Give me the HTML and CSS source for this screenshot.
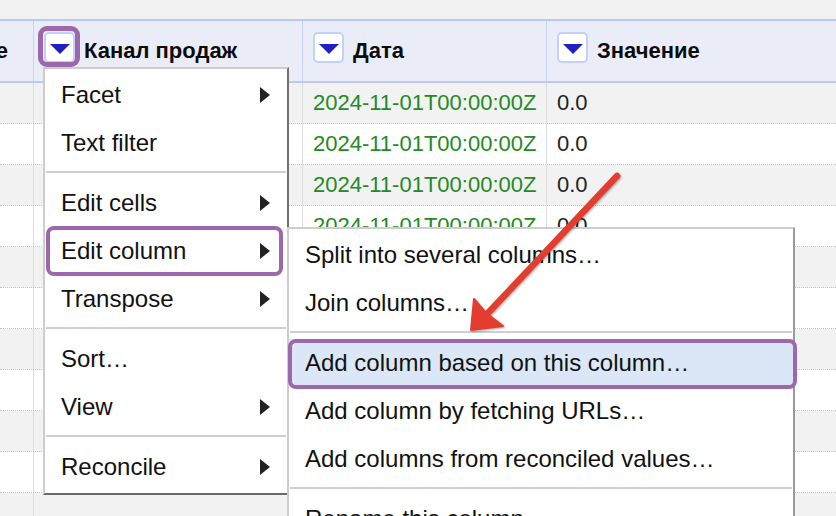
FILE: index.html
```html
<!DOCTYPE html>
<html lang="ru">
<head>
<meta charset="utf-8">
<title>OpenRefine — Edit column</title>
<link rel="stylesheet" href="styles.css">
</head>
<body>
<div class="topbar"></div>
<div class="grid">
  <div class="row head">
    <div class="hcell first"><span>Наименование</span></div>
    <div class="hcell"><span class="drop active"></span><span class="hlabel">Канал продаж</span></div>
    <div class="hcell"><span class="drop"></span><span class="hlabel">Дата</span></div>
    <div class="hcell"><span class="drop"></span><span class="hlabel">Значение</span></div>
  </div>
  <div class="body">
    <div class="row brow"><div class="cell"></div><div class="cell"></div><div class="cell date">2024-11-01T00:00:00Z</div><div class="cell num">0.0</div></div>
    <div class="row brow"><div class="cell"></div><div class="cell"></div><div class="cell date">2024-11-01T00:00:00Z</div><div class="cell num">0.0</div></div>
    <div class="row brow"><div class="cell"></div><div class="cell"></div><div class="cell date">2024-11-01T00:00:00Z</div><div class="cell num">0.0</div></div>
    <div class="row brow"><div class="cell"></div><div class="cell"></div><div class="cell date">2024-11-01T00:00:00Z</div><div class="cell num">0.0</div></div>
    <div class="row brow"><div class="cell"></div><div class="cell"></div><div class="cell"></div><div class="cell"></div></div>
    <div class="row brow"><div class="cell"></div><div class="cell"></div><div class="cell"></div><div class="cell"></div></div>
    <div class="row brow"><div class="cell"></div><div class="cell"></div><div class="cell"></div><div class="cell"></div></div>
    <div class="row brow"><div class="cell"></div><div class="cell"></div><div class="cell"></div><div class="cell"></div></div>
    <div class="row brow"><div class="cell"></div><div class="cell"></div><div class="cell"></div><div class="cell"></div></div>
    <div class="row brow"><div class="cell"></div><div class="cell"></div><div class="cell"></div><div class="cell"></div></div>
    <div class="row brow"><div class="cell"></div><div class="cell"></div><div class="cell"></div><div class="cell"></div></div>
  </div>
</div>

<div class="menu m1">
  <div class="item sub">Facet</div>
  <div class="item">Text filter</div>
  <div class="sep"></div>
  <div class="item sub">Edit cells</div>
  <div class="item sub hl hl-edit">Edit column</div>
  <div class="item sub">Transpose</div>
  <div class="sep"></div>
  <div class="item">Sort…</div>
  <div class="item sub">View</div>
  <div class="sep"></div>
  <div class="item sub">Reconcile</div>
</div>

<div class="menu m2">
  <div class="item">Split into several columns…</div>
  <div class="item">Join columns…</div>
  <div class="sep"></div>
  <div class="item hl hl-add selected">Add column based on this column…</div>
  <div class="item">Add column by fetching URLs…</div>
  <div class="item">Add columns from reconciled values…</div>
  <div class="sep"></div>
  <div class="item">Rename this column</div>
</div>

<svg class="annot" width="836" height="516" viewBox="0 0 836 516">
  <g class="arrow">
    <line x1="617" y1="176" x2="487" y2="314" stroke="#e33d30" stroke-width="6.5" stroke-linecap="round"/>
    <polygon points="471,330 474,299 486,313 503,326" fill="#e33d30" stroke="#e33d30" stroke-width="2" stroke-linejoin="round"/>
  </g>
</svg>
</body>
</html>
```

FILE: styles.css
```css
* { box-sizing: border-box; }
html, body { margin: 0; padding: 0; }
body {
  width: 836px;
  height: 516px;
  overflow: hidden;
  position: relative;
  background: #f2f2f2;
  font-family: "Liberation Sans", Arial, Helvetica, sans-serif;
  color: #111;
}
.topbar { height: 19px; background: #f2f2f2; }

.row {
  display: grid;
  grid-template-columns: 33px 269px 244px 1fr;
}
.head {
  height: 64px;
  background: #eaedf7;
  border-top: 2px solid #b8c9fa;
  border-bottom: 2px solid #b8c9fa;
}
.hcell {
  display: flex;
  align-items: center;
  gap: 9px;
  padding-left: 10px;
  font-weight: bold;
  font-size: 22px;
  color: #0c0c0c;
  white-space: nowrap;
}
.hcell + .hcell { border-left: 1px solid #c5d2f6; }
.hcell.first {
  justify-content: flex-end;
  overflow: hidden;
  padding: 0 25px 0 0;
}
.hlabel { margin-bottom: 1px; }
.drop {
  position: relative;
  flex: none;
  width: 31px;
  height: 31px;
  margin-bottom: 7px;
  background: #fff;
  border: 2px solid #c3d1f8;
  border-radius: 5px;
  display: flex;
  align-items: center;
  justify-content: center;
}
.drop::before {
  content: "";
  width: 0;
  height: 0;
  border-left: 10px solid transparent;
  border-right: 10px solid transparent;
  border-top: 10px solid #1f1fc4;
  margin-top: 2px;
}
.drop.active::after {
  content: "";
  position: absolute;
  top: -8px;
  left: -8px;
  right: -7px;
  bottom: -6px;
  border: 5px solid #9c67ab;
  border-radius: 9px;
}

.brow {
  height: 41px;
  background: #f2f2f2;
  border-bottom: 1px dotted #c4c4c4;
}
.brow:nth-child(even) { background: #fff; }
.cell {
  display: flex;
  align-items: center;
  padding-left: 10px;
  font-size: 22px;
  white-space: nowrap;
  overflow: hidden;
}
.cell + .cell { border-left: 1px solid #dcdcdc; }
.date { color: #248a24; }
.num { color: #222; }

.menu {
  position: absolute;
  background: #fff;
  border-style: solid;
  border-width: 2px;
  border-color: #cdcdcd #727272 #6a6a6a #cdcdcd;
  padding: 2px 0;
  font-size: 24px;
  color: #111;
}
.m1 { left: 43px; top: 67px; width: 246px; z-index: 2; }
.m2 { left: 287px; top: 227px; width: 508px; z-index: 3; border-color: #cdcdcd #9a9a9a #9a9a9a #cdcdcd; }

.item {
  position: relative;
  height: 48px;
  line-height: 48px;
  padding: 0 17px 0 16px;
  display: flex;
  align-items: center;
  justify-content: space-between;
  white-space: nowrap;
}
.item.sub::after {
  content: "";
  width: 0;
  height: 0;
  border-left: 10px solid #222;
  border-top: 8px solid transparent;
  border-bottom: 8px solid transparent;
}
.sep {
  height: 2px;
  background: #cfcfcf;
  margin: 4px 1px 6px;
}
.selected { background: #dbe7f6; }
.hl::before {
  content: "";
  position: absolute;
  border: 4px solid #9c67ab;
  border-radius: 8px;
  pointer-events: none;
}
.hl-edit::before { top: -1px; bottom: -1px; left: 1px; right: 4px; }
.hl-add::before { top: 0; bottom: -2px; left: -1px; right: -4px; }

.annot {
  position: absolute;
  left: 0;
  top: 0;
  z-index: 5;
  pointer-events: none;
}
.arrow { filter: drop-shadow(1px 1.5px 1px rgba(0, 0, 0, 0.35)); }
```
